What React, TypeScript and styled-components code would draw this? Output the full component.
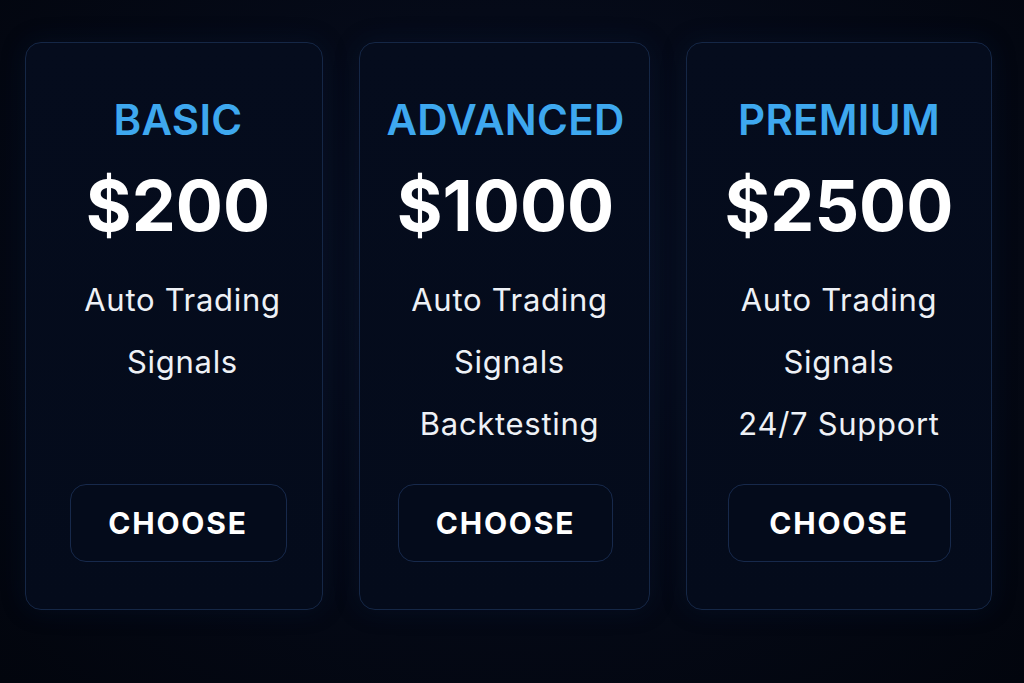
import React from "react";
import styled, { createGlobalStyle } from "styled-components";

const Global = createGlobalStyle`
  html, body { margin: 0; padding: 0; background: #03060f; }
  #root { width: 1024px; height: 683px; }
`;

const Page = styled.div`
  width: 1024px;
  height: 683px;
  box-sizing: border-box;
  display: flex;
  align-items: flex-start;
  gap: 36px;
  padding: 42px 32px 0 25px;
  background: radial-gradient(ellipse at 50% 40%, #081022 0%, #050a18 45%, #02050d 100%);
  font-family: Inter, "Noto Sans", sans-serif;
`;

const Card = styled.div<{ $w: number; $shift: number }>`
  width: ${(p) => p.$w}px;
  height: 568px;
  box-sizing: border-box;
  flex: none;
  display: flex;
  flex-direction: column;
  align-items: center;
  padding: 56px 0 47px ${(p) => p.$shift}px;
  border: 1.5px solid #152746;
  border-radius: 16px;
  background: linear-gradient(180deg, #050c1d 0%, #040b1b 100%);
  box-shadow: 0 0 24px rgba(10, 30, 70, 0.25);
`;

const Title = styled.div`
  font-size: 42px;
  line-height: 42px;
  font-weight: 600;
  color: #3ea8ef;
  letter-spacing: 0.3px;
`;

const Price = styled.div`
  margin-top: 30px;
  font-size: 70px;
  line-height: 70px;
  font-weight: 700;
  color: #ffffff;
`;

const Features = styled.div<{ $offset: number }>`
  margin-top: 28px;
  padding-left: ${(p) => p.$offset}px;
  display: flex;
  flex-direction: column;
  align-items: center;
`;

const Feature = styled.div`
  font-size: 31px;
  line-height: 62px;
  font-weight: 400;
  letter-spacing: 0.7px;
  color: #eef1f6;
`;

const Button = styled.button<{ $w: number }>`
  margin-top: auto;
  width: ${(p) => p.$w}px;
  height: 78px;
  box-sizing: border-box;
  border: 1.5px solid #17294b;
  border-radius: 16px;
  background: #040b1b;
  color: #ffffff;
  font-family: Inter, "Noto Sans", sans-serif;
  font-size: 30px;
  font-weight: 700;
  letter-spacing: 1.8px;
  cursor: pointer;
`;

const plans = [
  { name: "BASIC", price: "$200", w: 298, shift: 8, fo: 9, bw: 217, features: ["Auto Trading", "Signals"] },
  { name: "ADVANCED", price: "$1000", w: 291, shift: 2, fo: 8, bw: 215, features: ["Auto Trading", "Signals", "Backtesting"] },
  { name: "PREMIUM", price: "$2500", w: 306, shift: 0, fo: 0, bw: 223, features: ["Auto Trading", "Signals", "24/7 Support"] },
];

export default function App() {
  return (
    <>
      <Global />
      <Page>
        {plans.map((p) => (
          <Card key={p.name} $w={p.w} $shift={p.shift}>
            <Title>{p.name}</Title>
            <Price>{p.price}</Price>
            <Features $offset={p.fo}>
              {p.features.map((f) => (
                <Feature key={f}>{f}</Feature>
              ))}
            </Features>
            <Button $w={p.bw}>CHOOSE</Button>
          </Card>
        ))}
      </Page>
    </>
  );
}
